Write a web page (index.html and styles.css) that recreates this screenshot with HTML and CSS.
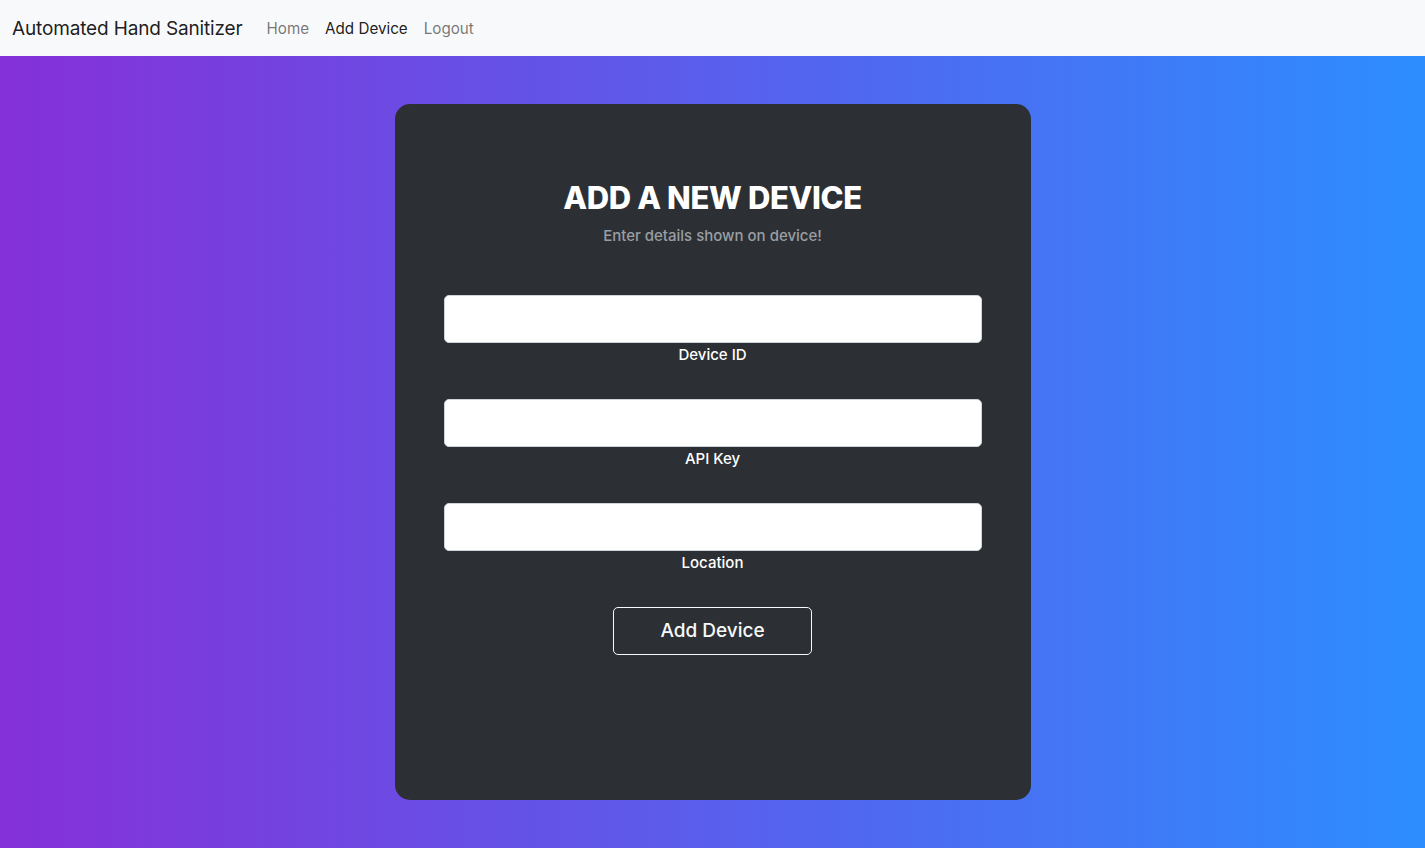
FILE: index.html
```html
<!DOCTYPE html>
<html lang="en">
<head>
<meta charset="utf-8">
<title>Add Device</title>
<link rel="stylesheet" href="styles.css">
</head>
<body>
<nav class="navbar">
  <a class="brand" href="#">Automated Hand Sanitizer</a>
  <ul class="nav">
    <li><a class="nav-link" href="#">Home</a></li>
    <li><a class="nav-link active" href="#">Add Device</a></li>
    <li><a class="nav-link" href="#">Logout</a></li>
  </ul>
</nav>
<main class="page">
  <section class="card">
    <h2 class="title">ADD A NEW DEVICE</h2>
    <p class="subtitle">Enter details shown on device!</p>
    <form class="form">
      <div class="field">
        <input class="input" type="text" id="deviceId">
        <label class="label" for="deviceId">Device ID</label>
      </div>
      <div class="field">
        <input class="input" type="text" id="apiKey">
        <label class="label" for="apiKey">API Key</label>
      </div>
      <div class="field">
        <input class="input" type="text" id="location">
        <label class="label" for="location">Location</label>
      </div>
      <button class="btn" type="button">Add Device</button>
    </form>
  </section>
</main>
</body>
</html>
```

FILE: styles.css
```css
* { box-sizing: border-box; }
html, body { height: 100%; }
body {
  margin: 0;
  font-family: Inter, "Noto Sans", "Liberation Sans", sans-serif;
  font-size: 16px;
  line-height: 1.5;
  color: #212529;
  display: flex;
  flex-direction: column;
}
.navbar {
  height: 56px;
  flex: none;
  background: #f8f9fa;
  display: flex;
  align-items: center;
  padding: 2px 12px 0;
}
.brand {
  font-size: 19px;
  color: rgba(0,0,0,.9);
  text-decoration: none;
  margin-right: 16px;
  letter-spacing: -0.15px;
}
.nav {
  display: flex;
  list-style: none;
  margin: 0;
  padding: 0;
}
.nav-link {
  display: block;
  padding: 8px;
  font-size: 15.2px;
  color: rgba(0,0,0,.55);
  text-decoration: none;
}
.nav-link.active { color: rgba(0,0,0,.9); }
.page {
  flex: 1;
  background: linear-gradient(to right, #8530d8, #2d8dff);
  display: flex;
  justify-content: center;
  padding-top: 48px;
  padding-bottom: 48px;
}
.card {
  width: 636px;
  height: 696px;
  background: #2c3034;
  border-radius: 15px;
  padding: 74px 49px 0;
  text-align: center;
  color: #fff;
}
.title {
  margin: 0;
  font-size: 31px;
  font-weight: 800;
  line-height: 40px;
  letter-spacing: -0.35px;
}
.subtitle {
  margin: 0;
  margin-top: 7px;
  font-size: 15px;
  font-weight: 500;
  color: #9a9ea3;
}
.form {
  margin-top: 47px;
  display: flex;
  flex-direction: column;
  align-items: center;
}
.field {
  width: 100%;
  display: flex;
  flex-direction: column;
  margin-bottom: 32px;
}
.input {
  width: 100%;
  height: 48px;
  border: 1px solid #ced4da;
  border-radius: 5px;
  background: #fff;
  font-size: 16px;
  padding: 6px 12px;
}
.label {
  font-size: 15px;
  font-weight: 500;
  line-height: 24px;
}
.btn {
  width: 199px;
  height: 48px;
  border: 1px solid #f8f9fa;
  border-radius: 5px;
  background: transparent;
  color: #f8f9fa;
  font-family: inherit;
  font-size: 19px;
  font-weight: 500;
}
```
